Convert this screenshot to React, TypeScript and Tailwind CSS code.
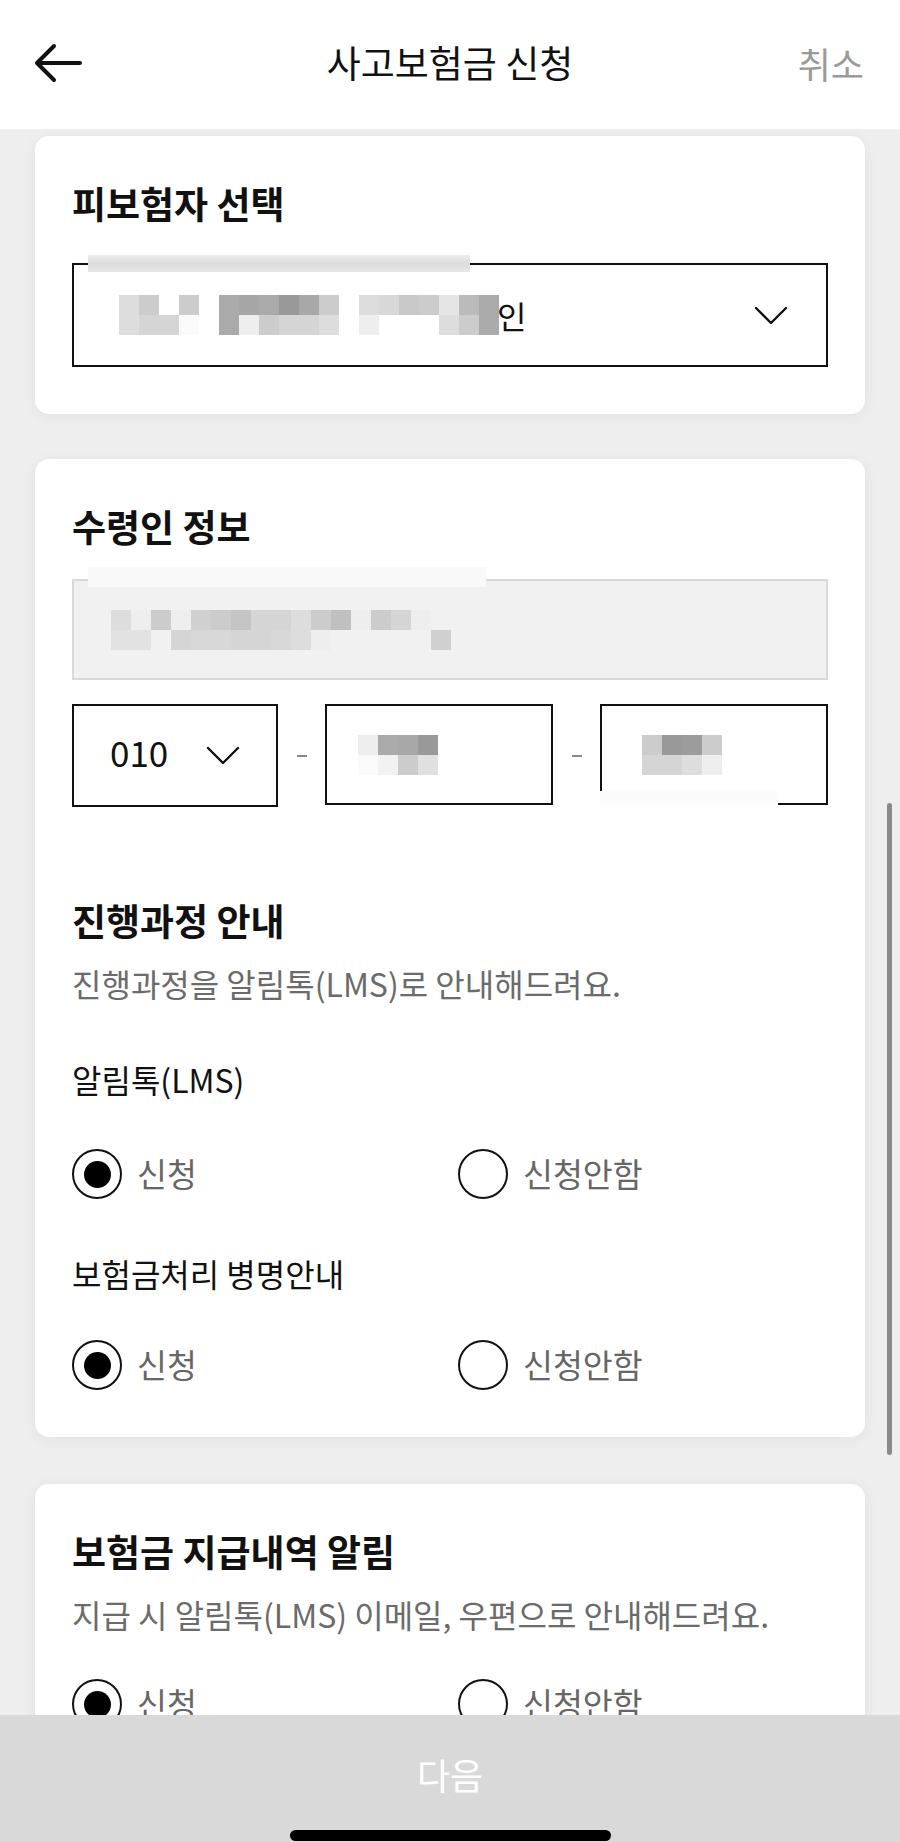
import React from 'react';

// pixelated (redacted) text blocks, one class per 20px cell
type Cells = string[][];

const nameCells: Cells = [
  ['bg-[#dddddd]', 'bg-[#cccccc]', 'bg-[#ffffff]', 'bg-[#cccccc]', 'bg-[#ffffff]', 'bg-[#aaaaaa]', 'bg-[#a6a6a6]', 'bg-[#aaaaaa]', 'bg-[#999999]', 'bg-[#a8a8a8]', 'bg-[#cccccc]', 'bg-[#ffffff]', 'bg-[#dddddd]', 'bg-[#d8d8d8]', 'bg-[#c8c8c8]', 'bg-[#cccccc]', 'bg-[#e5e5e5]', 'bg-[#bbbbbb]', 'bg-[#aaaaaa]'],
  ['bg-[#dddddd]', 'bg-[#d5d5d5]', 'bg-[#d5d5d5]', 'bg-[#fafafa]', 'bg-[#ffffff]', 'bg-[#aaaaaa]', 'bg-[#eeeeee]', 'bg-[#cccccc]', 'bg-[#d5d5d5]', 'bg-[#d5d5d5]', 'bg-[#dddddd]', 'bg-[#ffffff]', 'bg-[#eeeeee]', 'bg-[#ffffff]', 'bg-[#ffffff]', 'bg-[#ffffff]', 'bg-[#dddddd]', 'bg-[#cccccc]', 'bg-[#aaaaaa]'],
];

const addressCells: Cells = [
  ['bg-[#dddddd]', 'bg-[#eeeeee]', 'bg-[#cccccc]', 'bg-[#eeeeee]', 'bg-[#d0d0d0]', 'bg-[#cccccc]', 'bg-[#c5c5c5]', 'bg-[#d5d5d5]', 'bg-[#d5d5d5]', 'bg-[#dddddd]', 'bg-[#cccccc]', 'bg-[#c0c0c0]', 'bg-[#eeeeee]', 'bg-[#cccccc]', 'bg-[#d5d5d5]', 'bg-[#eeeeee]', 'bg-[#f1f1f1]', 'bg-[#f1f1f1]'],
  ['bg-[#e2e2e2]', 'bg-[#e2e2e2]', 'bg-[#f1f1f1]', 'bg-[#d5d5d5]', 'bg-[#d8d8d8]', 'bg-[#d8d8d8]', 'bg-[#d5d5d5]', 'bg-[#d5d5d5]', 'bg-[#d8d8d8]', 'bg-[#dddddd]', 'bg-[#eeeeee]', 'bg-[#f1f1f1]', 'bg-[#f1f1f1]', 'bg-[#f1f1f1]', 'bg-[#f1f1f1]', 'bg-[#f1f1f1]', 'bg-[#d0d0d0]', 'bg-[#f1f1f1]'],
];

const midCells: Cells = [
  ['bg-[#eeeeee]', 'bg-[#aaaaaa]', 'bg-[#a8a8a8]', 'bg-[#999999]'],
  ['bg-[#fafafa]', 'bg-[#f2f2f2]', 'bg-[#cccccc]', 'bg-[#e0e0e0]'],
];

const lastCells: Cells = [
  ['bg-[#cccccc]', 'bg-[#999999]', 'bg-[#9c9c9c]', 'bg-[#cccccc]'],
  ['bg-[#d5d5d5]', 'bg-[#d5d5d5]', 'bg-[#dddddd]', 'bg-[#eeeeee]'],
];

const Mosaic: React.FC<{ cells: Cells }> = ({ cells }) => (
  <div className="flex flex-col">
    {cells.map((row, i) => (
      <div key={i} className="flex">
        {row.map((c, j) => (
          <div key={j} className={`w-[20px] h-[20px] ${c}`} />
        ))}
      </div>
    ))}
  </div>
);

const Chevron: React.FC<{ className?: string }> = ({ className }) => (
  <svg className={className} viewBox="0 0 34 19" fill="none">
    <path d="M2 2 L17 17 L32 2" stroke="#111" strokeWidth="2.4" strokeLinecap="round" strokeLinejoin="round" />
  </svg>
);

const Radio: React.FC<{ checked?: boolean; label: string }> = ({ checked, label }) => (
  <div className="flex items-center gap-[15px]">
    <div className="w-[50px] h-[50px] rounded-full border-[2.5px] border-[#111] flex items-center justify-center">
      {checked && <div className="w-[27px] h-[27px] rounded-full bg-black" />}
    </div>
    <span className="text-[32.5px] leading-[40px] text-[#666] mb-[3px]">{label}</span>
  </div>
);

const RadioRow: React.FC<{ className?: string }> = ({ className }) => (
  <div className={`grid grid-cols-[386px_1fr] h-[50px] ${className ?? ''}`}>
    <Radio checked label="신청" />
    <Radio label="신청안함" />
  </div>
);

const CardTitle: React.FC<{ children: React.ReactNode; className?: string }> = ({ children, className }) => (
  <h2 className={`text-[37px] leading-[40px] font-bold text-[#111] ${className ?? ''}`}>{children}</h2>
);

const Card: React.FC<{ children: React.ReactNode; className?: string }> = ({ children, className }) => (
  <section className={`mx-[35px] bg-white rounded-[14px] shadow-[0_2px_14px_rgba(0,0,0,0.06)] pt-[47px] pb-[47px] px-[37px] ${className ?? ''}`}>
    {children}
  </section>
);

const App: React.FC = () => {
  return (
    <div className="relative h-[1842px] overflow-hidden bg-[#eeeeee] font-['Noto_Sans_CJK_KR',sans-serif]">
      {/* Header */}
      <header className="h-[129px] bg-white flex items-center justify-between pl-[33px] pr-[36px] pb-[4px]">
        <svg className="w-[50px] h-[40px]" viewBox="0 0 50 40" fill="none">
          <path d="M47 20 H4 M21 3 L4 20 L21 37" stroke="#111" strokeWidth="4" strokeLinecap="round" strokeLinejoin="round" />
        </svg>
        <h1 className="absolute left-0 right-0 text-center text-[37px] leading-[40px] text-[#111] top-[42px] pointer-events-none">
          사고보험금 신청
        </h1>
        <span className="text-[36px] leading-[40px] text-[#9a9a9a]">취소</span>
      </header>

      {/* 피보험자 선택 */}
      <Card className="mt-[7px]">
        <CardTitle>피보험자 선택</CardTitle>
        <div className="relative mt-[40px] h-[104px] border-2 border-[#111] flex items-center pl-[45px] pr-[38px]">
          <div className="absolute -top-[10px] left-[14px] w-[382px] h-[17px] bg-gradient-to-b from-[#eeeeee] via-[#dcdcdc] to-[#e8e8e8]" />
          <div className="flex items-center">
            <Mosaic cells={nameCells} />
            <span className="text-[32px] leading-[40px] text-[#111] -ml-[2px]">인</span>
          </div>
          <Chevron className="ml-auto w-[34px] h-[19px]" />
        </div>
      </Card>

      {/* 수령인 정보 */}
      <Card className="mt-[45px]">
        <CardTitle>수령인 정보</CardTitle>
        <div className="relative mt-[33px] h-[101px] bg-[#f1f1f1] border-2 border-[#d9d9d9] flex items-center pl-[37px]">
          <div className="absolute -top-[14px] left-[14px] w-[398px] h-[20px] bg-[#f9f9f9]" />
          <Mosaic cells={addressCells} />
        </div>

        <div className="mt-[24px] h-[103px] flex items-center">
          <div className="w-[206px] h-full border-2 border-[#111] flex items-center pl-[36px] pr-[36px]">
            <span className="text-[35px] leading-[40px] text-[#111] mb-[8px]">010</span>
            <Chevron className="ml-auto w-[34px] h-[19px]" />
          </div>
          <div className="w-[47px] flex justify-center">
            <div className="w-[10px] h-[2px] bg-[#888]" />
          </div>
          <div className="w-[228px] h-[101px] self-start border-2 border-[#111] flex items-center pl-[31px]">
            <Mosaic cells={midCells} />
          </div>
          <div className="w-[47px] flex justify-center">
            <div className="w-[10px] h-[2px] bg-[#888]" />
          </div>
          <div className="relative w-[228px] h-[101px] self-start border-2 border-[#111] flex items-center pl-[40px]">
            <Mosaic cells={lastCells} />
            <div className="absolute -left-[2px] bottom-[-2px] w-[178px] h-[14px] bg-[#fbfbfb]" />
          </div>
        </div>

        <CardTitle className="mt-[93px]">진행과정 안내</CardTitle>
        <p className="mt-[23px] text-[32px] leading-[40px] text-[#6b6b6b]">
          진행과정을 알림톡(LMS)로 안내해드려요.
        </p>

        <p className="mt-[56px] text-[32px] leading-[40px] text-[#111]">알림톡(LMS)</p>
        <RadioRow className="mt-[50px]" />

        <p className="mt-[54px] text-[32px] leading-[40px] text-[#111]">보험금처리 병명안내</p>
        <RadioRow className="mt-[47px]" />
      </Card>

      {/* 보험금 지급내역 알림 */}
      <Card className="mt-[47px]">
        <CardTitle>보험금 지급내역 알림</CardTitle>
        <p className="mt-[23px] text-[32px] leading-[40px] text-[#6b6b6b]">
          지급 시 알림톡(LMS) 이메일, 우편으로 안내해드려요.
        </p>
        <RadioRow className="mt-[45px]" />
      </Card>

      {/* scrollbar */}
      <div className="absolute left-[887px] top-[803px] w-[5px] h-[652px] rounded-full bg-[#8a8a8a]" />

      {/* bottom button */}
      <div className="absolute left-0 right-0 bottom-0 h-[127px] bg-[#d9d9d9] flex flex-col items-center">
        <button className="mt-[39px] text-[36px] leading-[40px] text-white">다음</button>
        <div className="mt-[36px] w-[321px] h-[11px] rounded-full bg-black" />
      </div>
    </div>
  );
};

export default App;
